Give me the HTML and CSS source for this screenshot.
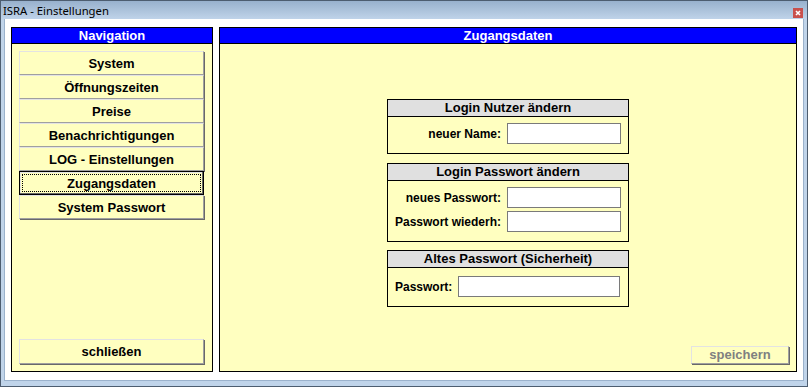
FILE: index.html
```html
<!DOCTYPE html>
<html lang="de">
<head>
    <meta charset="UTF-8">
    <title>ISRA - Einstellungen</title>
    <link rel="stylesheet" href="styles.css">
</head>
<body>
    <div class="window">
        <div class="titlebar">
            <span class="title">ISRA - Einstellungen</span>
            <span class="close">
                <svg width="10" height="10" viewBox="0 0 10 10">
                    <path d="M3 3 L7 7 M7 3 L3 7" stroke="#fff" stroke-width="1.6"/>
                </svg>
            </span>
        </div>
        <div class="client">
            <div class="panel nav">
                <div class="panel-head">Navigation</div>
                <div class="nav-body">
                    <button class="btn">System</button>
                    <button class="btn">Öffnungszeiten</button>
                    <button class="btn">Preise</button>
                    <button class="btn">Benachrichtigungen</button>
                    <button class="btn">LOG - Einstellungen</button>
                    <button class="btn focused"><span class="focus-ring">Zugangsdaten</span></button>
                    <button class="btn">System Passwort</button>
                    <button class="btn close-btn">schließen</button>
                </div>
            </div>
            <div class="panel main">
                <div class="panel-head">Zugangsdaten</div>
                <div class="main-body">
                    <div class="group g1">
                        <div class="group-head">Login Nutzer ändern</div>
                        <div class="group-body">
                            <div class="row">
                                <label>neuer Name:</label>
                                <input type="text" class="field">
                            </div>
                        </div>
                    </div>
                    <div class="group g2">
                        <div class="group-head">Login Passwort ändern</div>
                        <div class="group-body">
                            <div class="row">
                                <label>neues Passwort:</label>
                                <input type="password" class="field">
                            </div>
                            <div class="row">
                                <label>Passwort wiederh:</label>
                                <input type="password" class="field">
                            </div>
                        </div>
                    </div>
                    <div class="group g3">
                        <div class="group-head">Altes Passwort (Sicherheit)</div>
                        <div class="group-body">
                            <div class="row">
                                <label class="left">Passwort:</label>
                                <input type="password" class="field wide">
                            </div>
                        </div>
                    </div>
                    <button class="btn save" disabled>speichern</button>
                </div>
            </div>
        </div>
    </div>
</body>
</html>
```

FILE: styles.css
```css
body { margin: 0; padding: 0; font-family: "Liberation Sans", Arial, sans-serif; }
.window {
    width: 808px;
    height: 387px;
    box-sizing: border-box;
    border: 1px solid #4d5d70;
    background: #c0d4ea;
    display: flex;
    flex-direction: column;
}
.titlebar {
    height: 18px;
    display: flex;
    align-items: center;
    justify-content: space-between;
    padding: 0 4px 0 2px;
    background: linear-gradient(#98b1cd, #bfd3e9);
}
.title { font-family: "Noto Sans", sans-serif; font-size: 11.3px; color: #000; }
.close {
    width: 10px;
    height: 10px;
    background: #c9504c;
    display: flex;
    margin-top: 6px;
}
.client {
    flex: 1;
    margin: 0 3px 5px 3px;
    background: #fff;
    border: 1px solid #9bb2cc;
    border-width: 0 1px 1px 1px;
    display: flex;
    gap: 6px;
    padding: 8px 6px 8px 6px;
}
.panel {
    border: 1px solid #000;
    background: #ffffc0;
    display: flex;
    flex-direction: column;
}
.nav { width: 200px; }
.main { flex: 1; }
.panel-head {
    background: #0000ff;
    color: #fff;
    font-weight: bold;
    font-size: 13px;
    height: 15px;
    line-height: 15px;
    text-align: center;
    border-bottom: 1px solid #000;
}
.nav-body {
    flex: 1;
    display: flex;
    flex-direction: column;
    padding: 7px;
}
.btn {
    width: 185px;
    height: 24px;
    box-sizing: border-box;
    background: #ffffc0;
    border: 1px solid;
    border-color: #e3e3e3 #a0a0a0 #a0a0a0 #e3e3e3;
    box-shadow: 1px 1px 0 #696969;
    font-family: "Liberation Sans", Arial, sans-serif;
    font-size: 13px;
    font-weight: bold;
    color: #000;
    padding: 0;
    margin: 0;
}
.btn.focused {
    border: 1px solid #000;
    box-shadow: inset -1px -1px 0 #696969, inset 1px 1px 0 #e3e3e3;
    padding: 2px;
}
.focus-ring {
    display: block;
    height: 18px;
    line-height: 17px;
    box-sizing: border-box;
    border: 1px dotted #000;
}
.close-btn { margin-top: auto; height: 25px; }
.main-body {
    flex: 1;
    display: flex;
    flex-direction: column;
    align-items: center;
    padding: 55px 7px 7px 7px;
}
.group {
    width: 242px;
    box-sizing: border-box;
    border: 1px solid #000;
    margin-bottom: 8px;
}
.g1 { margin-bottom: 9px; }
.group-head {
    background: #e0e0e0;
    border-bottom: 1px solid #000;
    height: 16px;
    line-height: 16px;
    text-align: center;
    font-size: 13px;
    font-weight: bold;
    color: #000;
}
.group-body {
    display: flex;
    flex-direction: column;
    gap: 3px;
    padding: 6px 7px 9px 7px;
}
.g3 .group-body { padding-top: 8px; }
.row { display: flex; align-items: center; gap: 6px; }
.row label {
    flex: 1;
    text-align: right;
    white-space: nowrap;
    font-size: 12px;
    font-weight: bold;
    color: #000;
}
.row label.left { text-align: left; flex: none; }
.field {
    width: 114px;
    height: 21px;
    box-sizing: border-box;
    border: 1px solid #7a7a7a;
    background: #fff;
    margin: 0;
    padding: 0 2px;
}
.field.wide { width: 162px; }
.save {
    margin-top: auto;
    align-self: flex-end;
    width: 98px;
    height: 18px;
    color: #808080;
    font-size: 13px;
    line-height: 14px;
}
```
